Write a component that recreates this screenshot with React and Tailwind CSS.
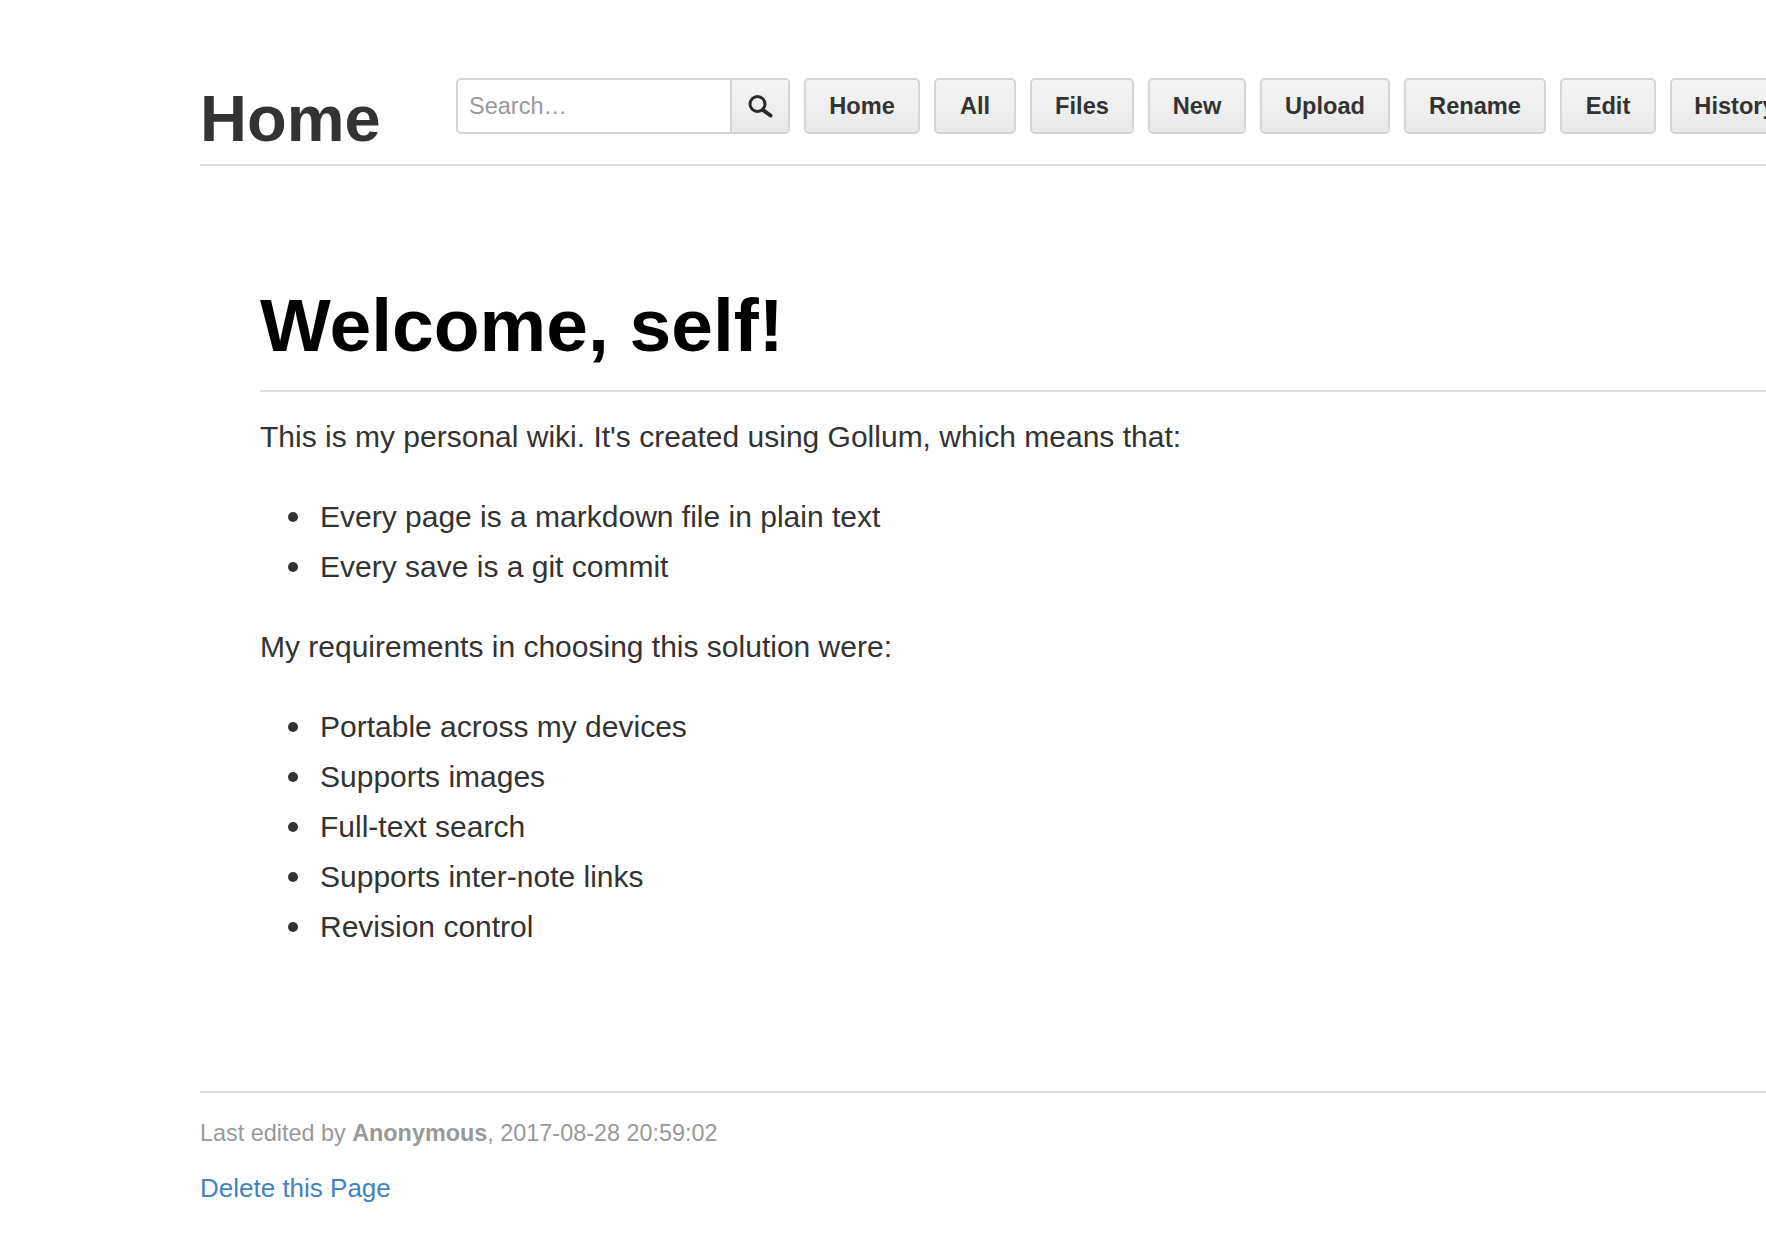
import React from "react";

function Btn({ children, w }) {
  return (
    <a className={`flex h-[56px] shrink-0 items-center justify-center rounded-[5px] border-2 border-[#d5d5d5] bg-gradient-to-b from-[#f5f5f5] to-[#e9e9e9] pt-[2px] text-[23.6px] font-bold text-[#333] ${w}`}>
      {children}
    </a>
  );
}

const Item = ({ children }) => (
  <li className="flex h-[50px] items-center leading-[50px]">
    <span className="mr-[22px] h-[10px] w-[10px] shrink-0 rounded-full bg-[#333]" />
    {children}
  </li>
);

export default function App() {
  return (
    <div className="h-[1238px] w-[1766px] overflow-hidden bg-white pl-[200px] font-['Liberation_Sans',Arial,sans-serif] text-[#333]">
      <header className="flex h-[166px] w-[1566px] items-start border-b-2 border-[#dedede]">
        <h1 className="mt-[78px] w-[256px] shrink-0 text-[65px] leading-[82px] font-bold text-[#333]">Home</h1>
        <div className="mt-[78px] flex gap-[14px]">
          <div className="flex h-[56px] w-[334px] shrink-0 rounded-[5px] border-2 border-[#d5d5d5]">
            <div className="flex-1 pl-[11px] text-[23.5px] leading-[52px] text-[#999]">Search…</div>
            <div className="flex w-[58px] items-center justify-center border-l-2 border-[#d5d5d5] bg-gradient-to-b from-[#f5f5f5] to-[#e9e9e9]">
              <svg width="28" height="28" viewBox="0 0 28 28" fill="none">
                <circle cx="11.5" cy="12" r="7.5" stroke="#2a2a2a" strokeWidth="3" />
                <path d="M17 18L24.5 23.5" stroke="#2a2a2a" strokeWidth="4" strokeLinecap="round" />
              </svg>
            </div>
          </div>
          <Btn w="w-[116px]">Home</Btn>
          <Btn w="w-[82px]">All</Btn>
          <Btn w="w-[104px]">Files</Btn>
          <Btn w="w-[98px]">New</Btn>
          <Btn w="w-[130px]">Upload</Btn>
          <Btn w="w-[142px]">Rename</Btn>
          <Btn w="w-[96px]">Edit</Btn>
          <Btn w="w-[130px]">History</Btn>
        </div>
      </header>
      <main className="h-[925px] w-[1566px] pl-[60px] text-[30px]">
        <h1 className="h-[226px] border-b-2 border-[#dedede] pt-[117px] text-[75px] leading-[84px] font-bold text-black">Welcome, self!</h1>
        <p className="mt-[20px] leading-[50px]">This is my personal wiki. It's created using Gollum, which means that:</p>
        <ul className="mt-[30px] pl-[28px]">
          <Item>Every page is a markdown file in plain text</Item>
          <Item>Every save is a git commit</Item>
        </ul>
        <p className="mt-[30px] leading-[50px]">My requirements in choosing this solution were:</p>
        <ul className="mt-[30px] pl-[28px]">
          <Item>Portable across my devices</Item>
          <Item>Supports images</Item>
          <Item>Full-text search</Item>
          <Item>Supports inter-note links</Item>
          <Item>Revision control</Item>
        </ul>
      </main>
      <footer className="w-[1566px] border-t-2 border-[#dedede]">
        <p className="mt-[23px] text-[23.4px] leading-[34px] text-[#999]">Last edited by <b>Anonymous</b>, 2017-08-28 20:59:02</p>
        <a className="mt-[20px] block text-[26px] leading-[36px] text-[#4183c4]">Delete this Page</a>
      </footer>
    </div>
  );
}
